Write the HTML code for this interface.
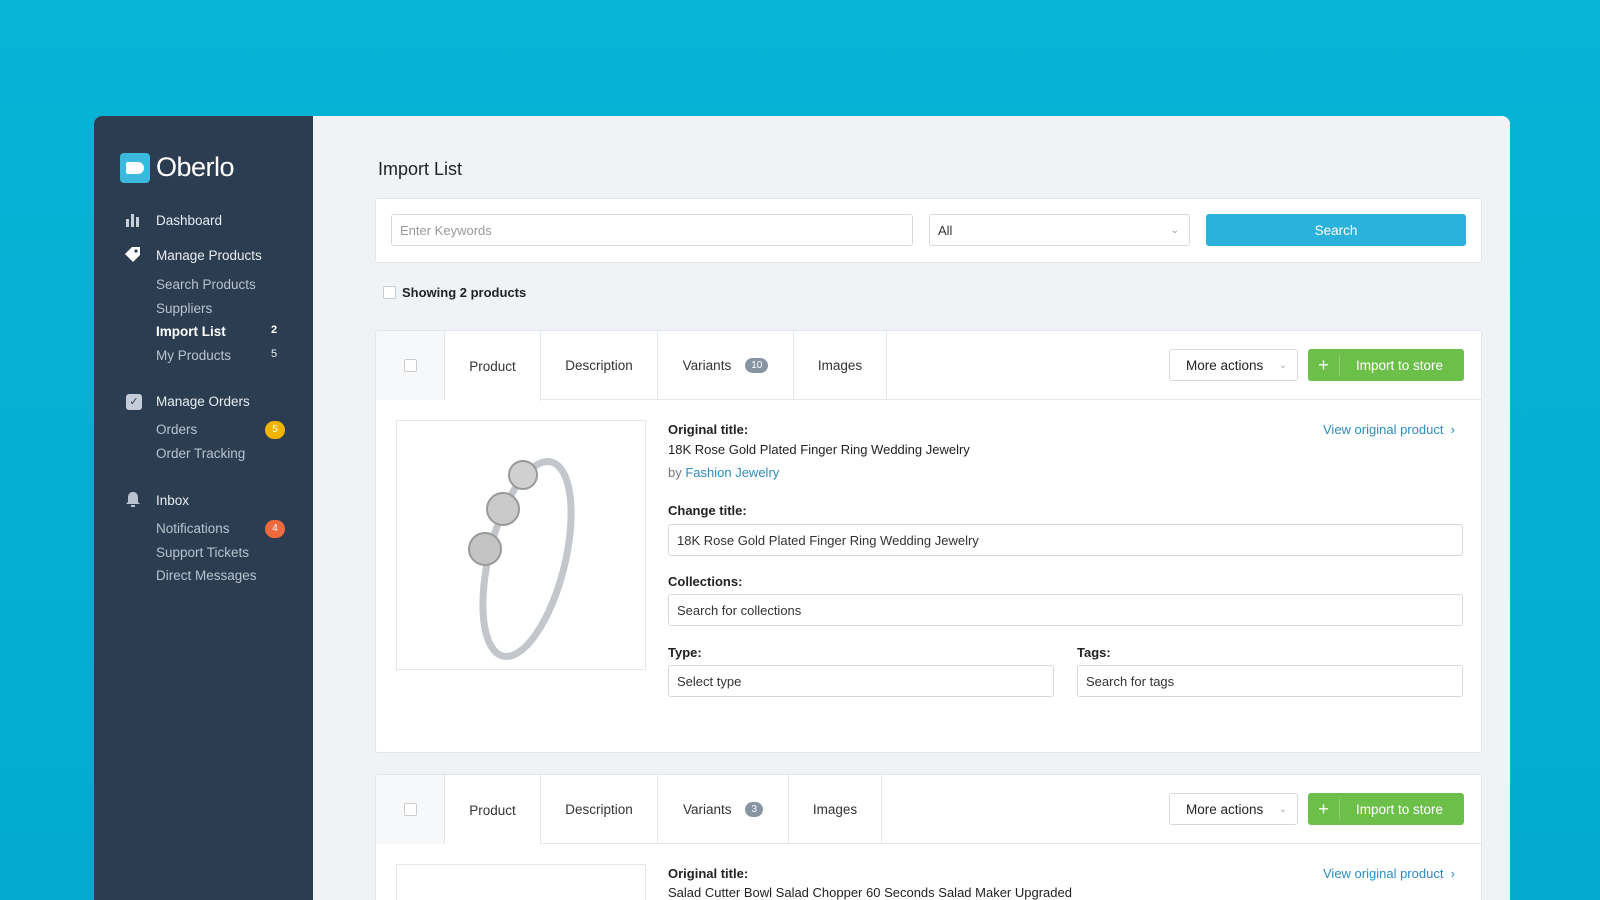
<!DOCTYPE html>
<html><head><meta charset="utf-8"><style>
*{box-sizing:border-box;margin:0;padding:0}
html,body{width:1600px;height:900px;overflow:hidden}
body{background:linear-gradient(180deg,#06b4d6,#04aad0);font-family:"Liberation Sans",sans-serif;position:relative}
.panel{position:absolute;left:94px;top:116px;width:1416px;height:784px;background:#f0f3f6;border-radius:8px 8px 0 0;overflow:hidden}
.side{position:absolute;left:0;top:0;width:219px;height:100%;background:#2c3d52;color:#c8d0da}
.logo{position:absolute;left:26px;top:36px;display:flex;align-items:center}
.logo .ic{width:30px;height:30px;background:#3bb8dc;border-radius:4px;position:relative}
.logo .ic:after{content:"";position:absolute;left:6px;top:9px;width:18px;height:12px;background:#fff;border-radius:2px 6px 6px 2px}
.logo span{color:#fff;font-size:27px;margin-left:6px;letter-spacing:-.5px}
.s{position:absolute;font-size:13.5px}
.h{color:#e8edf2;font-size:13.5px}
.sub{left:62px;color:#b8c2cf}
.badge{position:absolute;width:20px;height:18px;border-radius:9px;color:#fff;font-size:10px;text-align:center;line-height:18px}
.main{position:absolute;left:219px;top:0;right:0;height:100%;overflow:hidden}
.card{position:absolute;background:#fff;border:1px solid #e3e7ec;border-radius:3px;overflow:hidden}
.inp{position:absolute;border:1px solid #d5dadf;border-radius:3px;background:#fff;font-size:13px;color:#333;padding-left:8px;display:flex;align-items:center}
.lbl{position:absolute;font-size:13px;font-weight:bold;color:#222}
.tabs{position:absolute;left:0;top:0;right:0;height:69px;border-bottom:1px solid #e3e7ec}
.tab{position:absolute;top:0;height:69px;border-right:1px solid #e3e7ec;font-size:13.5px;color:#333;display:flex;align-items:center;justify-content:center}
.btn{position:absolute;border-radius:3px;font-size:13.5px;display:flex;align-items:center}
</style></head><body>
<div class="panel">
<div class="side">
<div class="logo"><div class="ic"></div><span>Oberlo</span></div>
<svg class="s" style="left:32px;top:96px" width="14" height="15"><rect x="0" y="7" width="3" height="8" fill="#c8d0da"/><rect x="5" y="2" width="3" height="13" fill="#c8d0da"/><rect x="10" y="5" width="3" height="10" fill="#c8d0da"/></svg>
<div class="s h" style="left:62px;top:97px">Dashboard</div>
<svg class="s" style="left:30px;top:131px" width="18" height="16"><path d="M1 7 L8 0 L16 0 L16 8 L9 15 Z" fill="#fff"/><circle cx="12" cy="4" r="1.6" fill="#2c3d52"/></svg>
<div class="s h" style="left:62px;top:132px">Manage Products</div>
<div class="s sub" style="top:161px">Search Products</div>
<div class="s sub" style="top:185px">Suppliers</div>
<div class="s sub" style="top:208px;color:#fff;font-weight:bold">Import List</div>
<div class="s" style="left:177px;top:208px;color:#fff;font-size:11px;font-weight:bold">2</div>
<div class="s sub" style="top:232px">My Products</div>
<div class="s" style="left:177px;top:232px;color:#e8edf2;font-size:11px">5</div>
<div class="s" style="left:32px;top:278px;width:16px;height:16px;background:#c3ccd8;border-radius:3px;color:#2c3d52;font-size:11px;text-align:center;line-height:16px">✓</div>
<div class="s h" style="left:62px;top:278px">Manage Orders</div>
<div class="s sub" style="top:306px">Orders</div>
<div class="badge" style="left:171px;top:305px;background:#f0b400">5</div>
<div class="s sub" style="top:330px">Order Tracking</div>
<svg class="s" style="left:31px;top:375px" width="16" height="17"><path d="M8 1 C4 1 3 4 3 7 L3 11 L1 13 L15 13 L13 11 L13 7 C13 4 12 1 8 1Z" fill="#b8c2cf"/><rect x="6" y="14" width="4" height="2" fill="#b8c2cf"/></svg>
<div class="s h" style="left:62px;top:377px">Inbox</div>
<div class="s sub" style="top:405px">Notifications</div>
<div class="badge" style="left:171px;top:404px;background:#ef6a3c">4</div>
<div class="s sub" style="top:429px">Support Tickets</div>
<div class="s sub" style="top:452px">Direct Messages</div>
</div>
<div class="main">
<div style="position:absolute;left:65px;top:43px;font-size:18px;color:#222">Import List</div>
<div class="card" style="left:62px;top:82px;width:1107px;height:65px">
<div class="inp" style="left:15px;top:15px;width:522px;height:32px;color:#999">Enter Keywords</div>
<div class="inp" style="left:553px;top:15px;width:261px;height:32px">All<span style="position:absolute;right:10px;color:#999;font-size:10px">⌄</span></div>
<div class="btn" style="left:830px;top:15px;width:260px;height:32px;background:#2ab1dc;color:#fff;justify-content:center">Search</div>
</div>
<div style="position:absolute;left:70px;top:170px;width:13px;height:13px;border:1px solid #ccc;border-radius:2px;background:#fff"></div>
<div style="position:absolute;left:89px;top:169px;font-size:13px;font-weight:bold;color:#222">Showing 2 products</div>

<div class="card" style="left:62px;top:214px;width:1107px;height:423px">
<div class="tabs">
<div class="tab" style="left:0;width:69px;background:#f6f8fa"><div style="width:13px;height:13px;border:1px solid #ccc;border-radius:2px;background:#fff"></div></div>
<div class="tab" style="left:69px;width:96px;height:70px;background:#fff">Product</div>
<div class="tab" style="left:165px;width:117px">Description</div>
<div class="tab" style="left:282px;width:136px">Variants<span style="margin-left:14px;background:#8795a3;color:#fff;font-size:10px;border-radius:8px;padding:2px 6px">10</span></div>
<div class="tab" style="left:418px;width:93px">Images</div>
<div class="btn" style="left:793px;top:18px;width:129px;height:32px;border:1px solid #d5dadf;color:#222;padding-left:16px">More actions<span style="position:absolute;right:10px;color:#aaa;font-size:10px">⌄</span></div>
<div class="btn" style="left:932px;top:18px;width:156px;height:32px;background:#6cc04a;color:#fff"><span style="width:32px;text-align:center;font-size:18px;border-right:1px solid #8fd070">+</span><span style="margin-left:16px">Import to store</span></div>
</div>
<div style="position:absolute;left:20px;top:89px;width:250px;height:250px;border:1px solid #e3e7ec">
<svg width="248" height="248" viewBox="0 0 248 248"><ellipse cx="130" cy="138" rx="38" ry="100" transform="rotate(14 130 138)" fill="none" stroke="#c3c7cb" stroke-width="7"/><circle cx="126" cy="54" r="14" fill="#d0d0d0" stroke="#999" stroke-width="2"/><circle cx="106" cy="88" r="16" fill="#cacaca" stroke="#999" stroke-width="2"/><circle cx="88" cy="128" r="16" fill="#c4c4c4" stroke="#999" stroke-width="2"/></svg>
</div>
<div class="lbl" style="left:292px;top:91px">Original title:</div>
<div style="position:absolute;left:292px;top:111px;font-size:13px;color:#222">18K Rose Gold Plated Finger Ring Wedding Jewelry</div>
<div style="position:absolute;left:292px;top:134px;font-size:13px;color:#777">by <span style="color:#2a8dc0">Fashion Jewelry</span></div>
<div style="position:absolute;right:26px;top:91px;font-size:13px;color:#2a8dc0">View original product &nbsp;›</div>
<div class="lbl" style="left:292px;top:172px">Change title:</div>
<div class="inp" style="left:292px;top:193px;width:795px;height:32px">18K Rose Gold Plated Finger Ring Wedding Jewelry</div>
<div class="lbl" style="left:292px;top:243px">Collections:</div>
<div class="inp" style="left:292px;top:263px;width:795px;height:32px">Search for collections</div>
<div class="lbl" style="left:292px;top:314px">Type:</div>
<div class="inp" style="left:292px;top:334px;width:386px;height:32px">Select type</div>
<div class="lbl" style="left:701px;top:314px">Tags:</div>
<div class="inp" style="left:701px;top:334px;width:386px;height:32px">Search for tags</div>
</div>

<div class="card" style="left:62px;top:658px;width:1107px;height:140px">
<div class="tabs">
<div class="tab" style="left:0;width:69px;background:#f6f8fa"><div style="width:13px;height:13px;border:1px solid #ccc;border-radius:2px;background:#fff"></div></div>
<div class="tab" style="left:69px;width:96px;height:70px;background:#fff">Product</div>
<div class="tab" style="left:165px;width:117px">Description</div>
<div class="tab" style="left:282px;width:131px">Variants<span style="margin-left:14px;background:#8795a3;color:#fff;font-size:10px;border-radius:8px;padding:2px 6px">3</span></div>
<div class="tab" style="left:413px;width:93px">Images</div>
<div class="btn" style="left:793px;top:18px;width:129px;height:32px;border:1px solid #d5dadf;color:#222;padding-left:16px">More actions<span style="position:absolute;right:10px;color:#aaa;font-size:10px">⌄</span></div>
<div class="btn" style="left:932px;top:18px;width:156px;height:32px;background:#6cc04a;color:#fff"><span style="width:32px;text-align:center;font-size:18px;border-right:1px solid #8fd070">+</span><span style="margin-left:16px">Import to store</span></div>
</div>
<div style="position:absolute;left:20px;top:89px;width:250px;height:150px;border:1px solid #e3e7ec"></div>
<div class="lbl" style="left:292px;top:91px">Original title:</div>
<div style="position:absolute;left:292px;top:110px;font-size:13px;color:#222">Salad Cutter Bowl Salad Chopper 60 Seconds Salad Maker Upgraded</div>
<div style="position:absolute;right:26px;top:91px;font-size:13px;color:#2a8dc0">View original product &nbsp;›</div>
</div>
</div>
</div>
</body></html>
